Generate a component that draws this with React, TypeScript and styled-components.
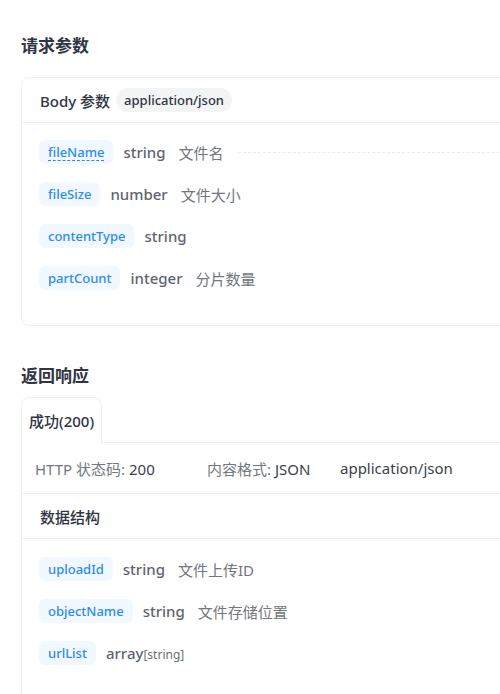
import React from 'react'
import styled, { createGlobalStyle } from 'styled-components'

const GlobalStyle = createGlobalStyle`
  html, body {
    margin: 0;
    padding: 0;
    background: #fff;
    overflow: hidden;
  }
  body {
    font-family: "Noto Sans", "Noto Sans CJK SC", sans-serif;
  }
`

type Field = { name: string; type: string; sub?: string; desc?: string; hint?: boolean }

const requestFields: Field[] = [
  { name: 'fileName', type: 'string', desc: '文件名', hint: true },
  { name: 'fileSize', type: 'number', desc: '文件大小' },
  { name: 'contentType', type: 'string' },
  { name: 'partCount', type: 'integer', desc: '分片数量' },
]

const responseFields: Field[] = [
  { name: 'uploadId', type: 'string', desc: '文件上传ID' },
  { name: 'objectName', type: 'string', desc: '文件存储位置' },
  { name: 'urlList', type: 'array', sub: '[string]' },
]

const FieldRows: React.FC<{ fields: Field[] }> = ({ fields }) => (
  <>
    {fields.map((f) => (
      <Row key={f.name}>
        <NameChip>
          <NameText $hint={!!f.hint}>{f.name}</NameText>
        </NameChip>
        <TypeText>
          {f.type}
          {f.sub && <SubType>{f.sub}</SubType>}
        </TypeText>
        {f.desc && <Desc>{f.desc}</Desc>}
        {f.hint && <Leader />}
      </Row>
    ))}
  </>
)

export default function App() {
  return (
    <Page>
      <GlobalStyle />
      <SectionTitle>请求参数</SectionTitle>
      <Card>
        <CardHeader>
          <HeaderLabel>Body 参数</HeaderLabel>
          <Pill>application/json</Pill>
        </CardHeader>
        <FieldList>
          <FieldRows fields={requestFields} />
        </FieldList>
      </Card>

      <SectionTitle $top>返回响应</SectionTitle>
      <TabBar>
        <Tab>成功(200)</Tab>
        <TabFiller />
      </TabBar>
      <Panel>
        <StatusRow>
          <StatusItem>
            HTTP 状态码: <b>200</b>
          </StatusItem>
          <StatusItem>
            内容格式: <b>JSON</b>
          </StatusItem>
          <StatusItem>
            <b>application/json</b>
          </StatusItem>
        </StatusRow>
        <SubHeader>数据结构</SubHeader>
        <FieldList $top={18} $bottom={40}>
          <FieldRows fields={responseFields} />
        </FieldList>
      </Panel>
    </Page>
  )
}

const Page = styled.div`
  width: 620px;
  padding: 34px 0 0 21px;
  box-sizing: border-box;
`

const SectionTitle = styled.h2<{ $top?: boolean }>`
  margin: ${(p) => (p.$top ? '38px' : '0')} 0 0;
  font-size: 17px;
  line-height: 24px;
  font-weight: 700;
  color: #2f3542;
`

const Card = styled.div`
  margin-top: 19px;
  border: 1px solid #eef0f3;
  border-radius: 8px;
`

const CardHeader = styled.div`
  display: flex;
  align-items: center;
  gap: 6px;
  height: 44px;
  padding: 0 18px;
  border-bottom: 1px solid #eef0f3;
`

const HeaderLabel = styled.span`
  font-size: 15px;
  font-weight: 500;
  color: #2f3542;
`

const Pill = styled.span`
  display: inline-flex;
  align-items: center;
  height: 24px;
  padding: 0 8px;
  border-radius: 12px;
  background: #f3f4f6;
  font-size: 13px;
  font-weight: 500;
  color: #2f3542;
`

const FieldList = styled.div<{ $top?: number; $bottom?: number }>`
  display: flex;
  flex-direction: column;
  gap: 18px;
  padding: ${(p) => p.$top ?? 17}px 0 ${(p) => p.$bottom ?? 35}px 17px;
`

const Row = styled.div`
  display: flex;
  align-items: center;
  height: 24px;
`

const NameChip = styled.span`
  display: inline-flex;
  align-items: center;
  height: 24px;
  padding: 0 9px;
  border-radius: 6px;
  background: #f2f8ff;
`

const NameText = styled.span<{ $hint: boolean }>`
  font-size: 13px;
  font-weight: 500;
  color: #2a8cf0;
  border-bottom: ${(p) => (p.$hint ? '1px dashed #2a8cf0' : 'none')};
  line-height: 16px;
`

const TypeText = styled.span`
  margin-left: 10px;
  font-size: 15px;
  font-weight: 500;
  color: #5f6470;
`

const SubType = styled.span`
  font-size: 12px;
  font-weight: 400;
  color: #6b6f78;
`

const Desc = styled.span`
  margin-left: 13px;
  font-size: 15px;
  color: #72767e;
`

const Leader = styled.span`
  flex: 1;
  margin-left: 14px;
  border-top: 1px dashed #e8eaee;
`

const TabBar = styled.div`
  display: flex;
  margin-top: 9px;
`

const Tab = styled.div`
  display: flex;
  align-items: center;
  height: 45px;
  padding: 0 7px;
  border: 1px solid #eef0f3;
  border-bottom: none;
  border-radius: 8px 8px 0 0;
  font-size: 15px;
  font-weight: 500;
  color: #2f3542;
`

const TabFiller = styled.div`
  flex: 1;
  border-bottom: 1px solid #eef0f3;
`

const Panel = styled.div`
  border-left: 1px solid #eef0f3;
`

const StatusRow = styled.div`
  display: grid;
  grid-template-columns: 172px 133px auto;
  align-items: center;
  height: 50px;
  padding-left: 13px;
  border-bottom: 1px solid #eef0f3;
`

const StatusItem = styled.span`
  font-size: 15px;
  color: #73777f;
  white-space: nowrap;

  b {
    font-weight: 400;
    color: #3a3f4b;
  }
`

const SubHeader = styled.div`
  display: flex;
  align-items: center;
  height: 44px;
  padding-left: 18px;
  border-bottom: 1px solid #eef0f3;
  font-size: 15px;
  font-weight: 500;
  color: #2f3542;
`
